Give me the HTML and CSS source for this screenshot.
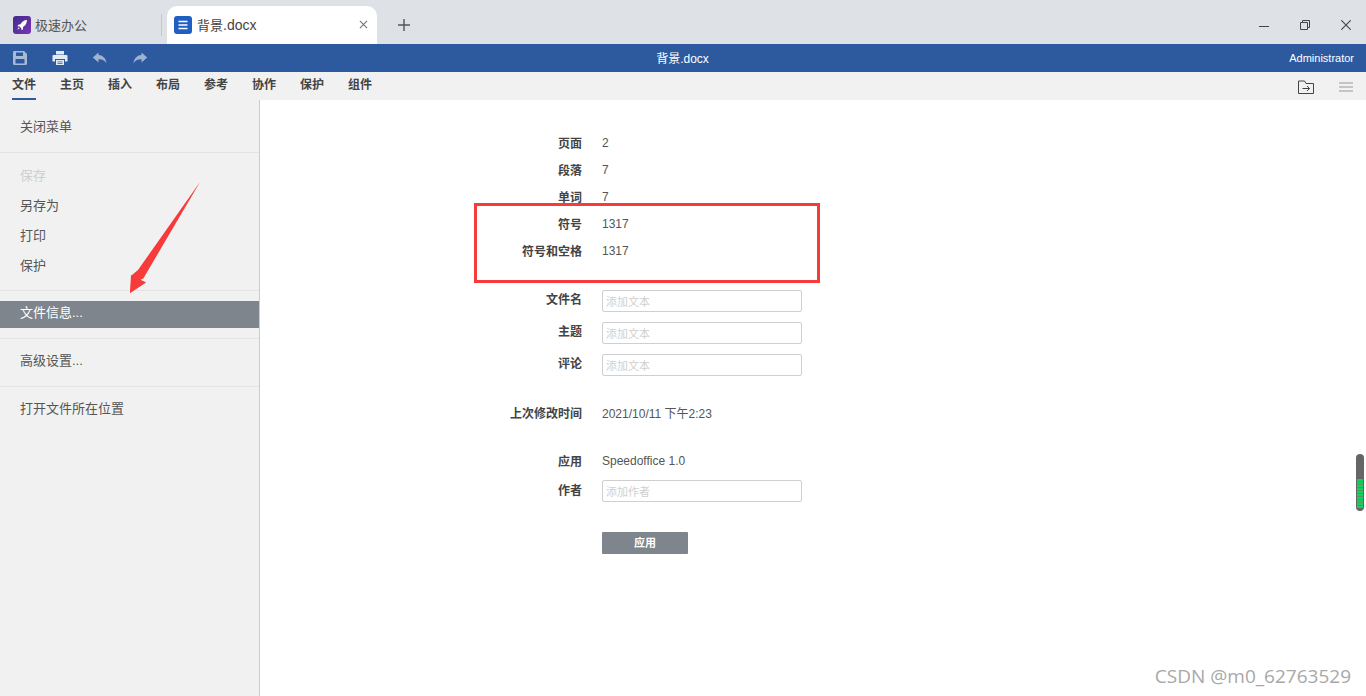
FILE: index.html
```html
<!DOCTYPE html>
<html lang="zh-CN">
<head>
<meta charset="utf-8">
<title>背景.docx</title>
<link rel="stylesheet" href="styles.css">
</head>
<body>
<div class="app">
  <header class="tabbar">
    <div class="home-tab">
      <svg class="tab-icon" viewBox="0 0 18 18"><defs><linearGradient id="lg" x1="0" y1="0" x2="1" y2="1"><stop offset="0" stop-color="#3f2a8c"/><stop offset="1" stop-color="#7b35b5"/></linearGradient></defs><rect width="18" height="18" rx="3" fill="url(#lg)"/><path d="M14 4c-3 .2-5 1.600-6.500 4.200L5.300 8.700l-.9 1.500 2.200.3 1.700 1.700.3 2 1.500-.9-.1-2.200C12.500 9.500 13.900 7.400 14 4zM5.700 11.300l-1.500 2.500 2.500-1.500z" fill="#fff"/></svg>
      <span>极速办公</span>
    </div>
    <div class="tab-sep"></div>
    <div class="doc-tab">
      <svg class="tab-icon" viewBox="0 0 18 18"><rect width="18" height="18" rx="3" fill="#1f5fc4"/><path d="M4.500 5.500h9M4.500 9h9M4.500 12.500h9" stroke="#fff" stroke-width="1.300"/></svg>
      <span class="doc-name">背景<span class="latin">.docx</span></span>
      <svg class="tab-close" viewBox="0 0 10 10"><path d="M1 1l8 8M9 1l-8 8" stroke="#777" stroke-width="1.300" fill="none"/></svg>
    </div>
    <svg class="tab-plus" viewBox="0 0 12 12"><path d="M6 0v12M0 6h12" stroke="#555" stroke-width="1.400"/></svg>
    <div class="win-controls">
      <svg class="win-btn" viewBox="0 0 10 10"><path d="M0 6.500h10" stroke="#444" stroke-width="1"/></svg>
      <svg class="win-btn" viewBox="0 0 10 10"><path d="M.5 2.500h7v7h-7zM2.500 2.500v-2h7v7h-2" stroke="#444" stroke-width="1" fill="none"/></svg>
      <svg class="win-btn" viewBox="0 0 10 10"><path d="M.3.300l9.400 9.400M9.700.300L.3 9.700" stroke="#444" stroke-width="1.100" fill="none"/></svg>
    </div>
  </header>

  <div class="titlebar">
    <div class="quick">
      <svg class="qicon" viewBox="0 0 16 16"><path fill-rule="evenodd" d="M2 1h10l3 3v9.500a1.500 1.500 0 0 1-1.500 1.500h-11A1.500 1.500 0 0 1 1 13.500v-11A1.500 1.500 0 0 1 2 1zm2 1.500v3.500h7V2.500zM3.500 9v4.500h9V9z" fill="#a9bad6"/></svg>
      <svg class="qicon" viewBox="0 0 16 16"><path fill-rule="evenodd" d="M4 1h8v3.500H4zM1.500 5h13A1 1 0 0 1 15.500 6v5.500h-2.500V9H3v2.500H.5V6a1 1 0 0 1 1-1zM4 10h8v5H4zm1.500 1.500v.8h5v-.8zm0 1.700v.7h5v-.7z" fill="#e4eaf4"/></svg>
      <svg class="qicon" viewBox="0 0 16 16"><path d="M6.500 2.500L.8 7.500l5.700 5V9.300c3.500 0 6 .8 8 4.200-.5-4.500-3-8-8-8.400z" fill="#a0b3d1"/></svg>
      <svg class="qicon" viewBox="0 0 16 16"><path d="M9.500 2.500l5.700 5-5.700 5V9.300c-3.500 0-6 .8-8 4.200.5-4.500 3-8 8-8.400z" fill="#a0b3d1"/></svg>
    </div>
    <div class="doc-title">背景.docx</div>
    <div class="user">Administrator</div>
  </div>

  <nav class="menubar">
    <div class="menu-items">
      <span class="menu-item is-current">文件</span>
      <span class="menu-item">主页</span>
      <span class="menu-item">插入</span>
      <span class="menu-item">布局</span>
      <span class="menu-item">参考</span>
      <span class="menu-item">协作</span>
      <span class="menu-item">保护</span>
      <span class="menu-item">组件</span>
    </div>
    <div class="menu-tools">
      <svg class="folder" viewBox="0 0 16 14"><path d="M.5 1h6l1.500 2.500h7.500v10H.5z" fill="none" stroke="#444"/><path d="M4.500 8.500h7M9 6l2.500 2.500L9 11" fill="none" stroke="#444"/></svg>
      <svg class="burger" viewBox="0 0 14 10"><path d="M0 1h14M0 5h14M0 9h14" stroke="#999" stroke-width="1"/></svg>
    </div>
  </nav>

  <div class="workspace">
    <aside class="sidebar">
      <div class="side-group side-first"><div class="side-item">关闭菜单</div></div>
      <div class="side-group side-list">
        <div class="side-item is-disabled">保存</div>
        <div class="side-item">另存为</div>
        <div class="side-item">打印</div>
        <div class="side-item">保护</div>
      </div>
      <div class="side-group"><div class="side-item is-active">文件信息...</div></div>
      <div class="side-group"><div class="side-item">高级设置...</div></div>
      <div class="side-group side-last"><div class="side-item">打开文件所在位置</div></div>
    </aside>

    <main class="panel">
      <div class="row"><div class="label">页面</div><div class="value">2</div></div>
      <div class="row"><div class="label">段落</div><div class="value">7</div></div>
      <div class="row"><div class="label">单词</div><div class="value">7</div></div>
      <div class="row"><div class="label">符号</div><div class="value">1317</div></div>
      <div class="row"><div class="label">符号和空格</div><div class="value">1317</div></div>

      <div class="row row-input row-first-input"><div class="label">文件名</div><div class="input">添加文本</div></div>
      <div class="row row-input"><div class="label">主题</div><div class="input">添加文本</div></div>
      <div class="row row-input"><div class="label">评论</div><div class="input">添加文本</div></div>

      <div class="row row-time"><div class="label">上次修改时间</div><div class="value">2021/10/11 下午2:23</div></div>
      <div class="row row-app"><div class="label">应用</div><div class="value">Speedoffice 1.0</div></div>
      <div class="row row-input row-author"><div class="label">作者</div><div class="input">添加作者</div></div>
      <div class="row row-action"><div class="label"></div><div class="apply">应用</div></div>
    </main>
  </div>

  <div class="red-box"></div>
  <svg class="red-arrow" viewBox="0 0 80 120"><path d="M71 1L14 98 2 94 1 112 17 101 9.500 100z" fill="#f73a3a"/><path d="M71 1L9 89 3 94 1 112 17 101.500 12 99z" fill="#f73a3a"/></svg>
  <div class="meter"></div>
  <div class="watermark">CSDN @m0_62763529</div>
</div>
</body>
</html>
```
FILE: styles.css
```css
* { box-sizing: border-box; }
html, body { margin: 0; height: 100%; overflow: hidden; }
body {
  font-family: "Liberation Sans", "Noto Sans CJK SC", sans-serif;
  font-size: 12px;
  color: #444;
  background: #fff;
}
.app { position: relative; width: 1366px; height: 696px; display: flex; flex-direction: column; }

.tabbar { height: 44px; background: #dee1e6; display: flex; align-items: flex-end; flex: none; }
.home-tab { width: 161px; height: 38px; padding-left: 13px; display: flex; align-items: center; gap: 4px; font-size: 13px; color: #555; padding-bottom: 1px; }
.tab-icon { width: 18px; height: 18px; flex: none; }
.tab-sep { width: 1px; height: 22px; background: #c4c7cc; margin-bottom: 8px; }
.doc-tab { width: 210px; height: 38px; margin-left: 5px; padding: 0 9px 1px 7px; background: #fff; border-radius: 10px 10px 0 0; display: flex; align-items: center; gap: 5px; font-size: 13px; color: #444; }
.doc-name { flex: 1; }
.latin { font-size: 14px; }
.tab-close { width: 9px; height: 9px; }
.tab-plus { width: 12px; height: 12px; margin: 0 0 13px 21px; }
.win-controls { margin-left: auto; padding: 0 15px 14px 0; display: flex; gap: 31px; }
.win-btn { width: 10px; height: 10px; display: block; }

.titlebar { height: 28px; background: #2d5a9e; color: #fff; display: flex; align-items: center; flex: none; }
.quick { flex: 1; display: flex; gap: 24px; padding-left: 12px; }
.qicon { width: 16px; height: 16px; display: block; }
.doc-title { font-size: 12px; margin: -2px 1px 0 0; }
.user { flex: 1; text-align: right; padding-right: 12px; font-size: 11px; }

.menubar { height: 28px; background: #f1f1f1; display: flex; justify-content: space-between; flex: none; }
.menu-items { display: flex; gap: 24px; padding-left: 12px; }
.menu-item { height: 28px; line-height: 27px; font-size: 12px; font-weight: 700; color: #444; }
.menu-item.is-current { border-bottom: 2px solid #2d5a9e; }
.menu-tools { display: flex; align-items: center; gap: 25px; padding: 2px 13px 0 0; }
.folder { width: 16px; height: 14px; }
.burger { width: 14px; height: 10px; }

.workspace { flex: 1; display: flex; min-height: 0; }
.sidebar { width: 260px; background: #f1f1f1; border-right: 1px solid #cbcbcb; flex: none; }
.side-group { padding: 10px 0; border-bottom: 1px solid #e4e4e4; }
.side-first { padding: 15px 0 10px; }
.side-list { padding: 11px 0 9px; display: flex; flex-direction: column; gap: 3px; }
.side-last { border-bottom: 0; }
.side-item { height: 27px; line-height: 24px; padding-left: 20px; font-size: 13px; color: #555; }
.side-item.is-disabled { color: #cfcfcf; }
.side-item.is-active { background: #7e858c; color: #fff; }

.panel { flex: 1; padding-top: 29px; }
.row { height: 27px; display: flex; align-items: center; gap: 20px; }
.label { width: 322px; text-align: right; font-weight: 700; color: #444; font-size: 12px; }
.value { color: #555; font-size: 12px; }
.row-input { height: 32px; align-items: flex-start; }
.row-input .label { line-height: 20px; }
.row-first-input { margin-top: 26px; }
.row-time { margin-top: 13px; }
.row-app { margin-top: 21px; }
.row-author { margin-top: 6px; height: 22px; align-items: center; }
.input { width: 200px; height: 22px; line-height: 22px; padding-left: 3px; border: 1px solid #cfcfcf; border-radius: 2px; background: #fff; font-size: 11px; color: #cfcfcf; }
.row-action { margin-top: 30px; height: 22px; }
.apply { width: 86px; height: 22px; line-height: 23px; text-align: center; background: #7e858c; color: #fff; font-size: 11px; font-weight: 700; border-radius: 1px; }

.red-box { position: absolute; left: 474px; top: 203px; width: 346px; height: 80px; border: 3px solid #f73a3a; }
.red-arrow { position: absolute; left: 129px; top: 181px; width: 80px; height: 120px; overflow: visible; }
.meter { position: absolute; left: 1356px; top: 454px; width: 8px; height: 57px; border-radius: 4px; background: repeating-linear-gradient(to bottom, #12d35a 0 2px, #4f9a68 2px 3px) 1px 25px / 6px 29px no-repeat, #666; }
.watermark { position: absolute; right: 15px; top: 663px; font-family: "Open Sans", sans-serif; font-size: 19px; line-height: 27px; color: #a8a8a8; }
```
